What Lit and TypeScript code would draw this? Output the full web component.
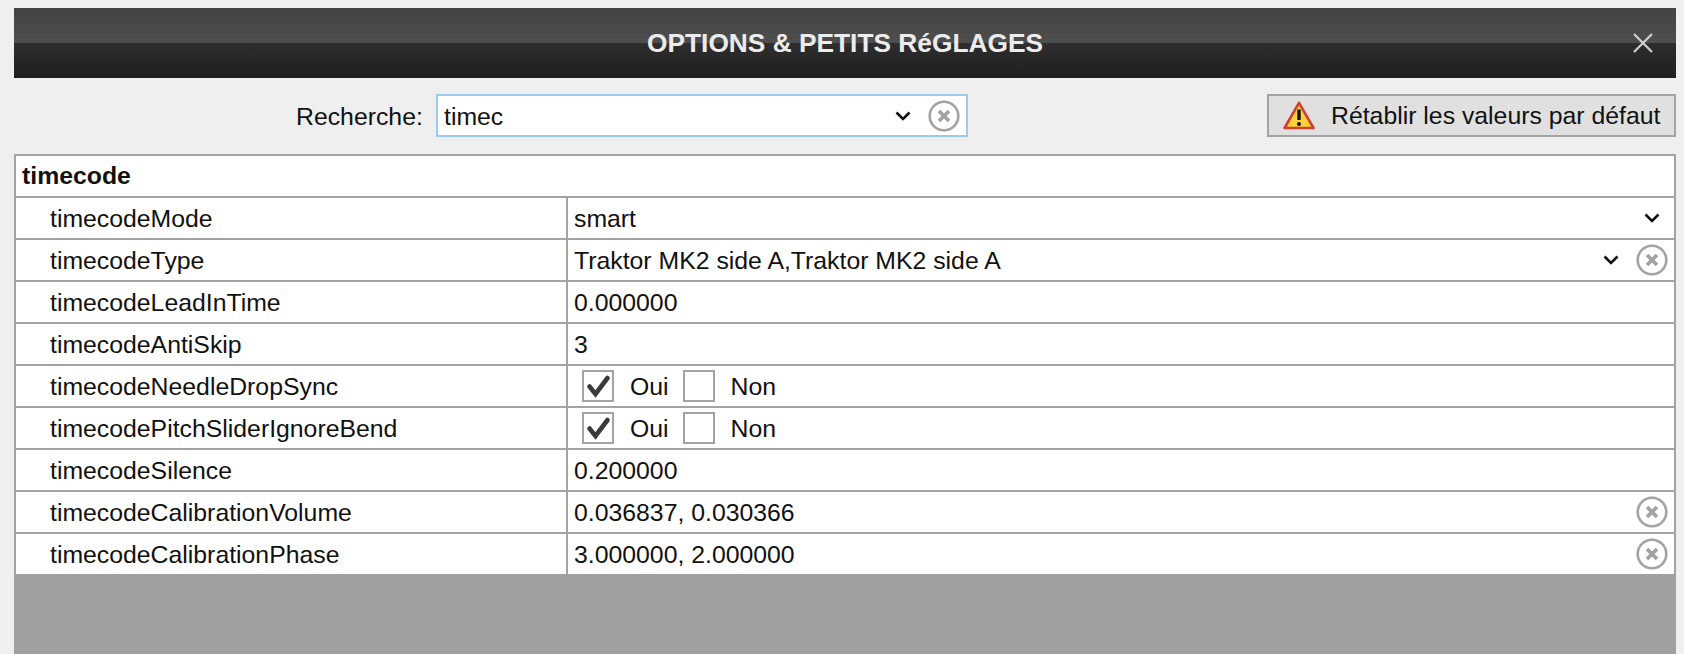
import { LitElement, html, css, svg } from "lit";
import { customElement } from "lit/decorators.js";

const chevron = html`<svg class="chev" width="16" height="10" viewBox="0 0 16 10"><path d="M1.500 1.500 8 8l6.500-6.500" fill="none" stroke="#111" stroke-width="2.600"/></svg>`;
const clear = html`<svg class="clear" width="32" height="32" viewBox="0 0 32 32"><circle cx="16" cy="16" r="14.300" fill="#fff" stroke="#a3a3a3" stroke-width="2.600"/><path d="M11 11l10 10M21 11 11 21" stroke="#a3a3a3" stroke-width="3.800"/></svg>`;
const check = svg`<path d="M5.500 14.500 11.500 22 23.500 6" fill="none" stroke="#3a3a3a" stroke-width="4.600" stroke-linecap="round"/>`;

@customElement("app-root")
export class AppRoot extends LitElement {
  static styles = css`
    :host { height: 654px; overflow: hidden; box-sizing: border-box; padding: 8px 8px 0 14px; background: #efefef;
      font-family: "Liberation Sans", Arial, sans-serif; font-size: 24.8px; color: #111; display: flex; flex-direction: column; }
    .title { height: 70px; flex: none; display: flex; align-items: center; justify-content: center; position: relative;
      background: linear-gradient(#434343 0, #4e4e4e 50%, #2e2e2e 50%, #1f1f1f 100%);
      color: #ececec; font-weight: 700; font-size: 26.300px; }
    .close { position: absolute; right: 22px; top: 24px; }
    .tools { height: 43px; flex: none; margin-top: 16px; display: flex; align-items: center; padding-left: 282px; }
    .lbl { width: 140px; flex: none; padding-top: 2px; }
    .search { width: 532px; height: 43px; flex: none; box-sizing: border-box; background: #fff; border: 2px solid #9ccbf0; display: flex; align-items: center; padding: 0 6px; }
    .t { padding-top: 2px; white-space: nowrap; }
    .grow { flex: 1; min-width: 0; }
    .chev { flex: none; }
    .search .chev { margin-right: 17px; }
    .search .clear { margin-right: 0; }
    .btn { margin-left: auto; width: 409px; height: 43px; box-sizing: border-box; background: #e0e0e0; border: 2px solid #a3a3a3; display: flex; align-items: center; padding-left: 14px; gap: 16px; white-space: nowrap; }
    .table { margin-top: 17px; flex: none; box-sizing: border-box; background: #fff; border: 2px solid #a3a3a3; border-bottom: 0; }
    .group { height: 40px; display: flex; align-items: center; padding-left: 6px; font-weight: 700; }
    .row { height: 40px; border-top: 2px solid #a3a3a3; display: grid; grid-template-columns: 550px 1fr; }
    .name { padding-left: 34px; display: flex; align-items: center; }
    .val { border-left: 2px solid #a3a3a3; padding: 0 6px; display: flex; align-items: center; min-width: 0; }
    .val .chev { margin-right: 8px; }
    .val .pad { margin-right: 9px; }
    .cb { width: 32px; height: 32px; flex: none; box-sizing: border-box; border: 2px solid #a3a3a3; background: #fff; margin-left: 8px; overflow: visible; display: block; }
    .yn { margin-left: 16px; }
    .yn.oui { margin-right: 14px; }
    .cb.b { margin-left: 0; }
    .fill { flex: 1; background: #a0a0a0; }
  `;

  private row(name: string, value: unknown) {
    return html`<div class="row"><div class="name"><span class="t">${name}</span></div><div class="val">${value}</div></div>`;
  }

  private yesNo() {
    return html`
      <svg class="cb" viewBox="0 0 28 28">${check}</svg><span class="t yn oui">Oui</span>
      <div class="cb b"></div><span class="t yn">Non</span>`;
  }

  render() {
    return html`
      <div class="title">OPTIONS &amp; PETITS RéGLAGES
        <svg class="close" width="22" height="22" viewBox="0 0 22 22"><path d="M2 2l18 18M20 2 2 20" stroke="#cfcfcf" stroke-width="2.200"/></svg>
      </div>
      <div class="tools">
        <span class="lbl">Recherche:</span>
        <div class="search"><span class="t grow">timec</span>${chevron}${clear}</div>
        <div class="btn">
          <svg width="32" height="29" viewBox="0 0 32 29"><path d="M16 1.800 30.500 27H1.500Z" fill="#fdd13a" stroke="#cf4030" stroke-width="2.600" stroke-linejoin="round"/><path d="M16 8.500v10.500" stroke="#111" stroke-width="3.400"/><circle cx="16" cy="23" r="2" fill="#111"/></svg>
          <span>Rétablir les valeurs par défaut</span>
        </div>
      </div>
      <div class="table">
        <div class="group">timecode</div>
        ${this.row("timecodeMode", html`<span class="t grow">smart</span>${chevron}`)}
        ${this.row("timecodeType", html`<span class="t grow">Traktor MK2 side A,Traktor MK2 side A</span>${chevron}<span class="pad"></span>${clear}`)}
        ${this.row("timecodeLeadInTime", html`<span class="t">0.000000</span>`)}
        ${this.row("timecodeAntiSkip", html`<span class="t">3</span>`)}
        ${this.row("timecodeNeedleDropSync", this.yesNo())}
        ${this.row("timecodePitchSliderIgnoreBend", this.yesNo())}
        ${this.row("timecodeSilence", html`<span class="t">0.200000</span>`)}
        ${this.row("timecodeCalibrationVolume", html`<span class="t grow">0.036837, 0.030366</span>${clear}`)}
        ${this.row("timecodeCalibrationPhase", html`<span class="t grow">3.000000, 2.000000</span>${clear}`)}
      </div>
      <div class="fill"></div>
    `;
  }
}
